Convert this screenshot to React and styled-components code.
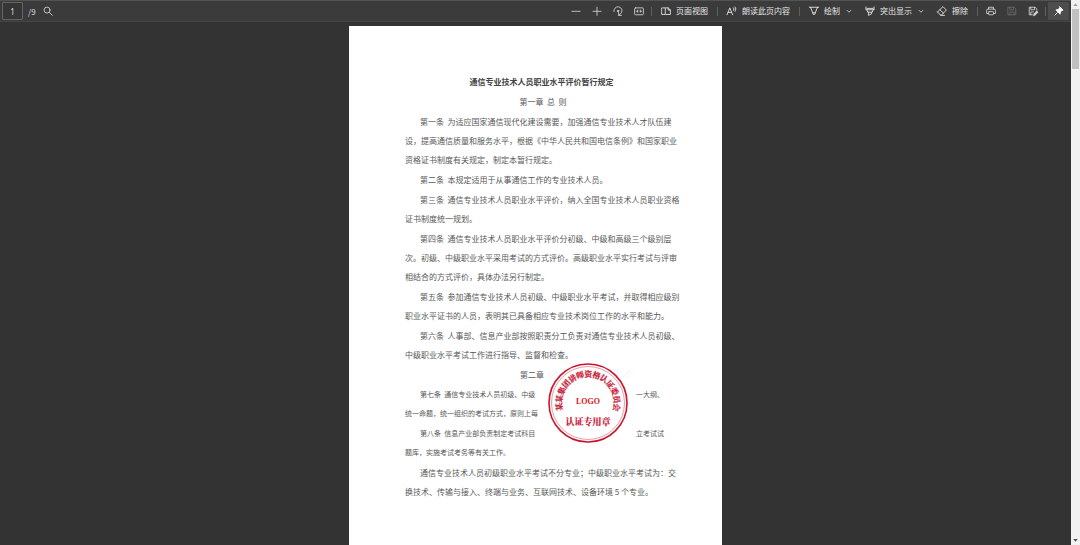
import React, { useState } from 'react';
import styled, { createGlobalStyle } from 'styled-components';

const GlobalStyle = createGlobalStyle`
  * {
    box-sizing: border-box;
  }
  body {
    margin: 0;
    background: #333333;
    font-family: "Noto Sans CJK SC", "Noto Sans", sans-serif;
    overflow: hidden;
  }
`;

const Viewer = styled.div`
  display: flex;
  height: 100vh;
  overflow: hidden;
`;

const Main = styled.main`
  flex: 1;
  display: flex;
  flex-direction: column;
  min-width: 0;
`;

const Toolbar = styled.header`
  flex: none;
  display: flex;
  align-items: center;
  justify-content: space-between;
  height: 22px;
  padding: 0 2px;
  border-top: 1px solid #525252;
  border-bottom: 1px solid #454545;
  background: #3b3b3b;
  color: #dedede;
`;

const Group = styled.div`
  display: flex;
  align-items: center;
`;

const PageLabel = styled.label`
  display: flex;
  align-items: center;
  gap: 5px;
  margin-right: 2px;
  font-size: 8px;
`;

const PageInput = styled.input`
  width: 21px;
  height: 18px;
  padding: 0;
  border: 1px solid #636363;
  border-radius: 1px;
  background: #363636;
  color: #dedede;
  font-family: "Noto Sans", sans-serif;
  font-size: 8px;
  text-align: center;
`;

const IconButton = styled.button`
  display: flex;
  align-items: center;
  justify-content: center;
  width: ${({ $narrow }) => ($narrow ? '18px' : '21px')};
  height: 18px;
  padding: 0;
  border: none;
  border-radius: 1px;
  background: ${({ $active }) => ($active ? '#4d4d4d' : 'transparent')};
  color: ${({ $active }) => ($active ? '#ffffff' : '#d0d0d0')};
  &:disabled {
    color: #686868;
  }
`;

const TextButton = styled.button`
  display: flex;
  align-items: center;
  gap: 5px;
  height: 18px;
  padding: 0 ${({ $menu }) => ($menu ? '0' : '7px')} 0 7px;
  border: none;
  background: transparent;
  color: #e6e6e6;
  font-family: inherit;
  font-size: 8px;
  line-height: 12px;
  white-space: nowrap;
`;

const Divider = styled.span`
  width: 1px;
  height: 9px;
  margin: 0 2px;
  background: #606060;
`;

const Svg = styled.svg`
  flex: none;
  width: 10px;
  height: 10px;
  overflow: visible;
  fill: none;
  stroke: currentColor;
  stroke-width: 1.4;
  stroke-linecap: round;
  stroke-linejoin: round;
`;

const Canvas = styled.section`
  flex: 1;
  min-height: 0;
  padding-top: 4px;
  overflow: hidden;
`;

const Paper = styled.article`
  display: flex;
  flex-direction: column;
  gap: 1px;
  width: 373px;
  min-height: 528px;
  margin: 0 auto;
  padding: 46px 40px 46px 56px;
  background: #ffffff;
  color: #585858;
  font-size: 8px;
  line-height: 19px;
  white-space: nowrap;
`;

const Title = styled.h1`
  width: 273px;
  margin: 0;
  color: #444444;
  font-size: 8px;
  font-weight: 700;
  text-align: center;
`;

const Chapter = styled.h2`
  width: 276px;
  margin: 0;
  font-size: 8px;
  font-weight: 400;
  text-align: center;
  white-space: pre;
`;

const Paragraph = styled.p`
  margin: 0;
  font-size: ${({ $small }) => ($small ? '7px' : '8px')};
  text-indent: 15px;
  white-space: pre;
`;

const Line = styled.span`
  display: block;
  & + & {
    text-indent: 0;
  }
`;

const Sealed = styled.div`
  position: relative;
  display: flex;
  flex-direction: column;
  gap: 1px;
`;

const SplitLine = styled.span`
  display: grid;
  grid-template-columns: 139px auto;
  column-gap: 92px;
  & + & {
    text-indent: 0;
  }
`;

const Before = styled.span`
  text-align: ${({ $end }) => ($end ? 'right' : 'left')};
`;

const After = styled.span`
  text-indent: 0;
`;

const SealImage = styled.svg`
  position: absolute;
  top: -3px;
  left: 139px;
  width: 91px;
  height: 82px;
  overflow: visible;
`;

const Scrollbar = styled.div`
  flex: none;
  display: flex;
  flex-direction: column;
  align-items: center;
  width: 9px;
  background: #f1f1f1;
`;

const ScrollArrow = styled.button`
  display: flex;
  align-items: center;
  justify-content: center;
  width: 9px;
  height: 9px;
  padding: 0;
  border: none;
  background: transparent;
  color: ${({ $dim }) => ($dim ? '#a3a3a3' : '#505050')};
`;

const Thumb = styled.div`
  width: 7px;
  height: 60px;
  margin-bottom: auto;
  background: #c1c1c1;
`;

const ICONS = {
  search: <><circle cx="6.5" cy="6.5" r="4.8" /><path d="M10.2 10.2 15 15" /></>,
  minus: <path d="M1.5 8.5h13" />,
  plus: <path d="M1.5 8.5h13M8 2v13" />,
  rotate: <><path d="M1.500 9A6.500 6.500 0 1 1 13.500 11L9 15" /><path d="M9 10.500V15h4.500" /><circle cx="8" cy="8" r="1.200" fill="currentColor" /></>,
  fit: <><rect x="1" y="3" width="14" height="11" rx="1.5" /><path d="M6.500 6.500v4l-3-2zM9.500 6.500v4l3-2z" fill="currentColor" strokeWidth="0.500" /></>,
  pages: <><path d="M6 3H1v10.500H6" strokeDasharray="2.500 1.500" /><path d="M7.500 3h4L15 6.500v7H7.500zM11.500 3v3.500H15" /></>,
  read: <><path d="M0 14 4.500 3 9 14M1.800 10.300h5.400" /><path d="M10.500 3q1.500 1.500 0 4M13 1.500q2.800 3 0 7" /></>,
  draw: <path d="M0.500 2h15M2.500 2l4.500 11.500h2L13.500 2M6 11h4" />,
  highlight: <path d="M1.500 1.500V6h13V1.500M3 6l1.500 4h7L13 6M5.500 10v5l5-2.500V10M3 3.800h10" />,
  erase: <path d="m1 9.500 8.500-8.500 5.500 5.500-8 8H5.500L1 9.500zM4.500 6l6 5.500M6 15h6" />,
  print: <><path d="M4 5V2h8v3M4 12H1V7q0-2 2-2h10q2 0 2 2v5h-3" /><rect x="4" y="9" width="8" height="5" rx="1" /></>,
  save: <path d="M2 2h9.500L14 4.500V14H2zM4.500 2v4h6V2M4.500 14V9.500h7V14" />,
  saveAs: <><path d="M7 14H2V2h9.500L14 4.500V7M4.500 2v4h6V2M4.500 14V9.500h4" /><path d="m9 15 .5-2.500L14 8l2 2-4.500 4.500z" fill="currentColor" /></>,
  pin: <><path d="m9.500 1.500 5 5-2 .8-2.200 2.200-.6 3.500-6.700-6.700 3.500-.6 2.200-2.200z" fill="currentColor" /><path d="M5.500 10.500 1.500 14.500" /></>,
  chevron: <path d="m5 7 3 3 3-3" />,
};

function Icon({ name }) {
  return <Svg viewBox="0 0 16 16" aria-hidden="true">{ICONS[name]}</Svg>;
}

function Tool({ icon, label, ...rest }) {
  return (
    <IconButton type="button" aria-label={label} {...rest}>
      <Icon name={icon} />
    </IconButton>
  );
}

function TextTool({ icon, menu, children }) {
  return (
    <>
      <TextButton type="button" $menu={menu}>
        <Icon name={icon} />
        {children}
      </TextButton>
      {menu && <Tool icon="chevron" label={`${children}选项`} $narrow />}
    </>
  );
}

const articles = [
  [
    '第一条  为适应国家通信现代化建设需要，加强通信专业技术人才队伍建',
    '设，提高通信质量和服务水平，根据《中华人民共和国电信条例》和国家职业',
    '资格证书制度有关规定，制定本暂行规定。',
  ],
  ['第二条  本规定适用于从事通信工作的专业技术人员。'],
  [
    '第三条  通信专业技术人员职业水平评价，纳入全国专业技术人员职业资格',
    '证书制度统一规划。',
  ],
  [
    '第四条  通信专业技术人员职业水平评价分初级、中级和高级三个级别层',
    '次。初级、中级职业水平采用考试的方式评价。高级职业水平实行考试与评审',
    '相结合的方式评价，具体办法另行制定。',
  ],
  [
    '第五条  参加通信专业技术人员初级、中级职业水平考试，并取得相应级别',
    '职业水平证书的人员，表明其已具备相应专业技术岗位工作的水平和能力。',
  ],
  [
    '第六条  人事部、信息产业部按照职责分工负责对通信专业技术人员初级、',
    '中级职业水平考试工作进行指导、监督和检查。',
  ],
];

const sealedArticles = [
  [
    ['第七条  通信专业技术人员初级、中级', '一大纲、'],
    ['统一命题，统一组织的考试方式，原则上每', ''],
  ],
  [
    ['第八条  信息产业部负责制定考试科目', '立考试试'],
    ['题库，实施考试考务等有关工作。', ''],
  ],
];

const closing = [
  '通信专业技术人员初级职业水平考试不分专业；中级职业水平考试为：交',
  '换技术、传输与接入、终端与业务、互联网技术、设备环境 5 个专业。',
];

function Article({ lines }) {
  return (
    <Paragraph>
      {lines.map((line) => <Line key={line}>{line}</Line>)}
    </Paragraph>
  );
}

function Seal() {
  const ring = '某某集团讲师资格认证委员会'.split('');
  const step = 197 / (ring.length - 1);

  return (
    <SealImage viewBox="0 0 91 82" role="img" aria-label="认证专用章">
      <g stroke="#ededed" strokeWidth="1" strokeDasharray="2 1">
        <path d="m3 15 8-8M5 17l8-8M79 15l8-8M81 17l8-8M41 58l9-10M43 60l9-10M79 54l8-8M81 56l8-8" />
      </g>
      <g transform="translate(44 41)" fill="#c8102e" textAnchor="middle">
        <circle r="39" fill="none" stroke="#c8142d" strokeWidth="1.6" />
        <circle r="36.5" fill="none" stroke="#d85a6a" strokeWidth="0.6" />
        <g
          fontFamily="'Noto Serif CJK SC', 'Noto Sans CJK SC', serif"
          fontWeight="700"
          stroke="#c8102e"
          strokeWidth="0.2"
        >
          {ring.map((char, index) => (
            <text key={index} y="-26" fontSize="8" transform={`rotate(${index * step - 98})`}>
              {char}
            </text>
          ))}
          <text y="22" fontSize="9">认证专用章</text>
        </g>
        <text y="1" fontSize="8" fontWeight="700" fill="#e0101c" fontFamily="'Liberation Serif', serif">
          LOGO
        </text>
      </g>
    </SealImage>
  );
}

function App() {
  const [page, setPage] = useState('1');

  return (
    <>
      <GlobalStyle />
      <Viewer>
        <Main>
          <Toolbar>
            <Group>
              <PageLabel>
                <PageInput
                  aria-label="页码"
                  value={page}
                  onChange={(event) => setPage(event.target.value)}
                />
                /9
              </PageLabel>
              <Tool icon="search" label="查找" />
            </Group>
            <Group>
              <Tool icon="minus" label="缩小" />
              <Tool icon="plus" label="放大" />
              <Tool icon="rotate" label="旋转" />
              <Tool icon="fit" label="适应宽度" />
              <Divider />
              <TextTool icon="pages">页面视图</TextTool>
              <Divider />
              <TextTool icon="read">朗读此页内容</TextTool>
              <Divider />
              <TextTool icon="draw" menu>绘制</TextTool>
              <TextTool icon="highlight" menu>突出显示</TextTool>
              <TextTool icon="erase">擦除</TextTool>
              <Divider />
              <Tool icon="print" label="打印" />
              <Tool icon="save" label="保存" disabled />
              <Tool icon="saveAs" label="另存为" />
              <Divider />
              <Tool icon="pin" label="固定工具栏" $active />
            </Group>
          </Toolbar>
          <Canvas>
            <Paper>
              <Title>通信专业技术人员职业水平评价暂行规定</Title>
              <Chapter>第一章  总  则</Chapter>
              {articles.map((lines) => <Article key={lines[0]} lines={lines} />)}
              <Sealed>
                <Chapter>
                  <SplitLine>
                    <Before $end>第二章</Before>
                  </SplitLine>
                </Chapter>
                {sealedArticles.map((lines) => (
                  <Paragraph key={lines[0][0]} $small>
                    {lines.map(([before, after]) => (
                      <SplitLine key={before}>
                        <Before>{before}</Before>
                        <After>{after}</After>
                      </SplitLine>
                    ))}
                  </Paragraph>
                ))}
                <Seal />
              </Sealed>
              <Article lines={closing} />
            </Paper>
          </Canvas>
        </Main>
        <Scrollbar>
          <ScrollArrow type="button" aria-label="向上滚动" $dim>
            <svg width="5" height="5" viewBox="0 0 16 16" fill="currentColor"><path d="m1 13 7-9 7 9z" /></svg>
          </ScrollArrow>
          <Thumb />
          <ScrollArrow type="button" aria-label="向下滚动">
            <svg width="5" height="5" viewBox="0 0 16 16" fill="currentColor"><path d="m1 3 7 9 7-9z" /></svg>
          </ScrollArrow>
        </Scrollbar>
      </Viewer>
    </>
  );
}

export default App;
